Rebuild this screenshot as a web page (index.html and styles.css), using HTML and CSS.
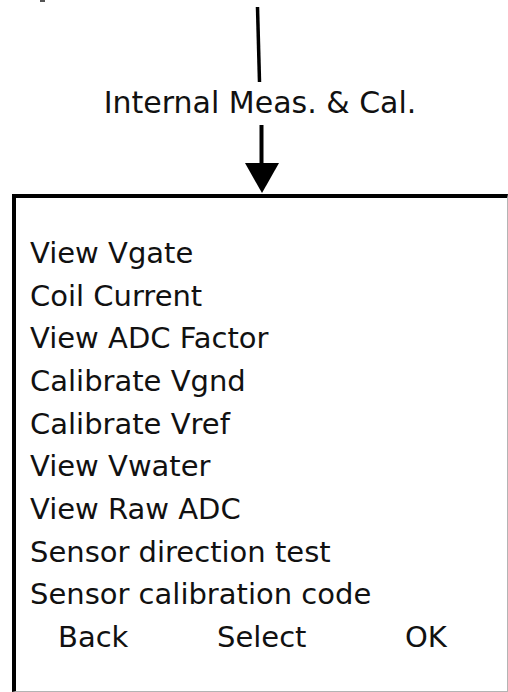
FILE: index.html
```html
<!DOCTYPE html>
<html lang="en">
<head>
  <meta charset="UTF-8">
  <title>Internal Meas. &amp; Cal.</title>
  <link rel="stylesheet" href="styles.css">
</head>
<body>

	<div class="flow">
		<svg class="stem" width="508" height="85" viewBox="0 0 508 85">
			<rect x="40" y="0" width="5" height="2" fill="#555"/>
			<line x1="257.5" y1="7" x2="259.5" y2="82" stroke="#000" stroke-width="3.5"/>
		</svg>
		<div class="label">Internal Meas. &amp; Cal.</div>
		<svg class="arrow" width="508" height="73" viewBox="0 0 508 73">
			<line x1="261.5" y1="4" x2="261.5" y2="46" stroke="#000" stroke-width="4"/>
			<polygon points="245,42 279,42 262,72" fill="#000"/>
		</svg>
	</div>

	<div class="screen">
		<ul class="menu">
			<li>View Vgate</li>
			<li>Coil Current</li>
			<li>View ADC Factor</li>
			<li>Calibrate Vgnd</li>
			<li>Calibrate Vref</li>
			<li>View Vwater</li>
			<li>View Raw ADC</li>
			<li>Sensor direction test</li>
			<li>Sensor calibration code</li>
		</ul>
		<div class="keys">
			<span>Back</span>
			<span>Select</span>
			<span>OK</span>
		</div>
	</div>

</body>
</html>
```

FILE: styles.css
```css
body{
	margin: 0;
	width: 508px;
	height: 692px;
	overflow: hidden;
	background: #fff;
	color: #111;
	font-family: "DejaVu Sans", sans-serif;
}

.flow{
	display: flex;
	flex-direction: column;
}
.stem,
.arrow{
	display: block;
}

.label{
	font-size: 30px;
	line-height: 36px;
	height: 36px;
	text-align: center;
	padding-left: 12px;
	white-space: nowrap;
}

/* the screen box, cut off at right and bottom */
.screen{
	box-sizing: border-box;
	margin-left: 12px;
	width: 496px;
	height: 498px;
	border-top: 4px solid #000;
	border-left: 4px solid #000;
	border-right: 1px solid #b4b4b4;
	border-bottom: 1px solid #b4b4b4;
	padding: 34px 0 0 14px;
	font-size: 29px;
	line-height: 42.67px;
}

.menu{
	margin: 0;
	padding: 0;
}
.menu li{
	list-style: none;
	white-space: nowrap;
}

.keys{
	display: grid;
	grid-template-columns: 159px 188px auto;
	padding-left: 28px;
}
```
